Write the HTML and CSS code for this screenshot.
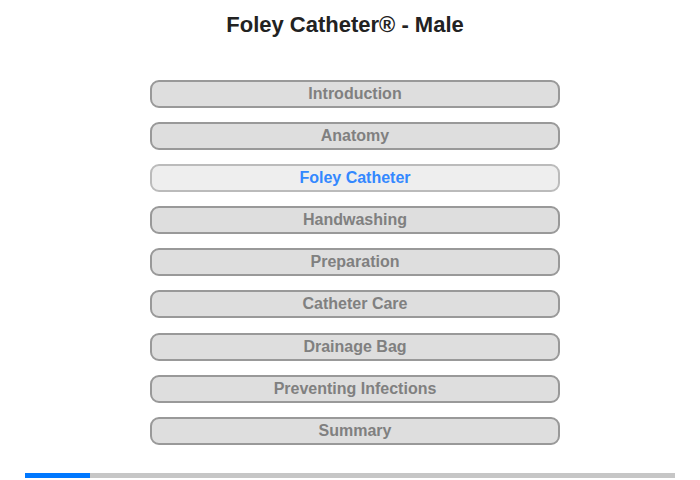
FILE: index.html
```html
<!DOCTYPE html>
<html lang="en">

<head>
    <meta charset="UTF-8">
    <meta name="viewport" content="width=device-width, initial-scale=1.0">
    <title>Foley Catheter - Male</title>
    <link rel="stylesheet" href="styles.css">
</head>

<body>
    <div class="page">
        <h1 class="title">Foley Catheter® - Male</h1>

        <nav class="menu">
            <button class="menu-item">Introduction</button>
            <button class="menu-item">Anatomy</button>
            <button class="menu-item active">Foley Catheter</button>
            <button class="menu-item">Handwashing</button>
            <button class="menu-item">Preparation</button>
            <button class="menu-item">Catheter Care</button>
            <button class="menu-item">Drainage Bag</button>
            <button class="menu-item">Preventing Infections</button>
            <button class="menu-item">Summary</button>
        </nav>

        <div class="progress">
            <div class="progress-fill" style="width: 10%;"></div>
        </div>
    </div>
</body>

</html>
```

FILE: styles.css
```css
* {
    box-sizing: border-box;
    margin: 0;
    padding: 0;
}

body {
    font-family: "Liberation Sans", Arial, sans-serif;
    background-color: #fff;
}

.page {
    width: 700px;
    height: 480px;
    display: flex;
    flex-direction: column;
    align-items: center;
    padding-top: 12px;
}

.title {
    font-size: 22px;
    font-weight: bold;
    color: #222;
    line-height: 26px;
    margin-right: 10px;
    margin-bottom: 42px;
}

.menu {
    display: flex;
    flex-direction: column;
    gap: 14.1px;
    margin-left: 10px;
}

.menu-item {
    width: 410px;
    height: 28px;
    background-color: #dedede;
    border: 2px solid #999;
    border-radius: 9px;
    font-family: inherit;
    font-size: 16px;
    font-weight: bold;
    color: #808080;
    cursor: pointer;
}

.menu-item.active {
    background-color: #eee;
    border-color: #bbb;
    color: #3388ff;
}

.progress {
    width: 650px;
    height: 5px;
    margin-top: 28px;
    background-color: #c6c6c6;
}

.progress-fill {
    height: 100%;
    background-color: #0078ff;
}
```
